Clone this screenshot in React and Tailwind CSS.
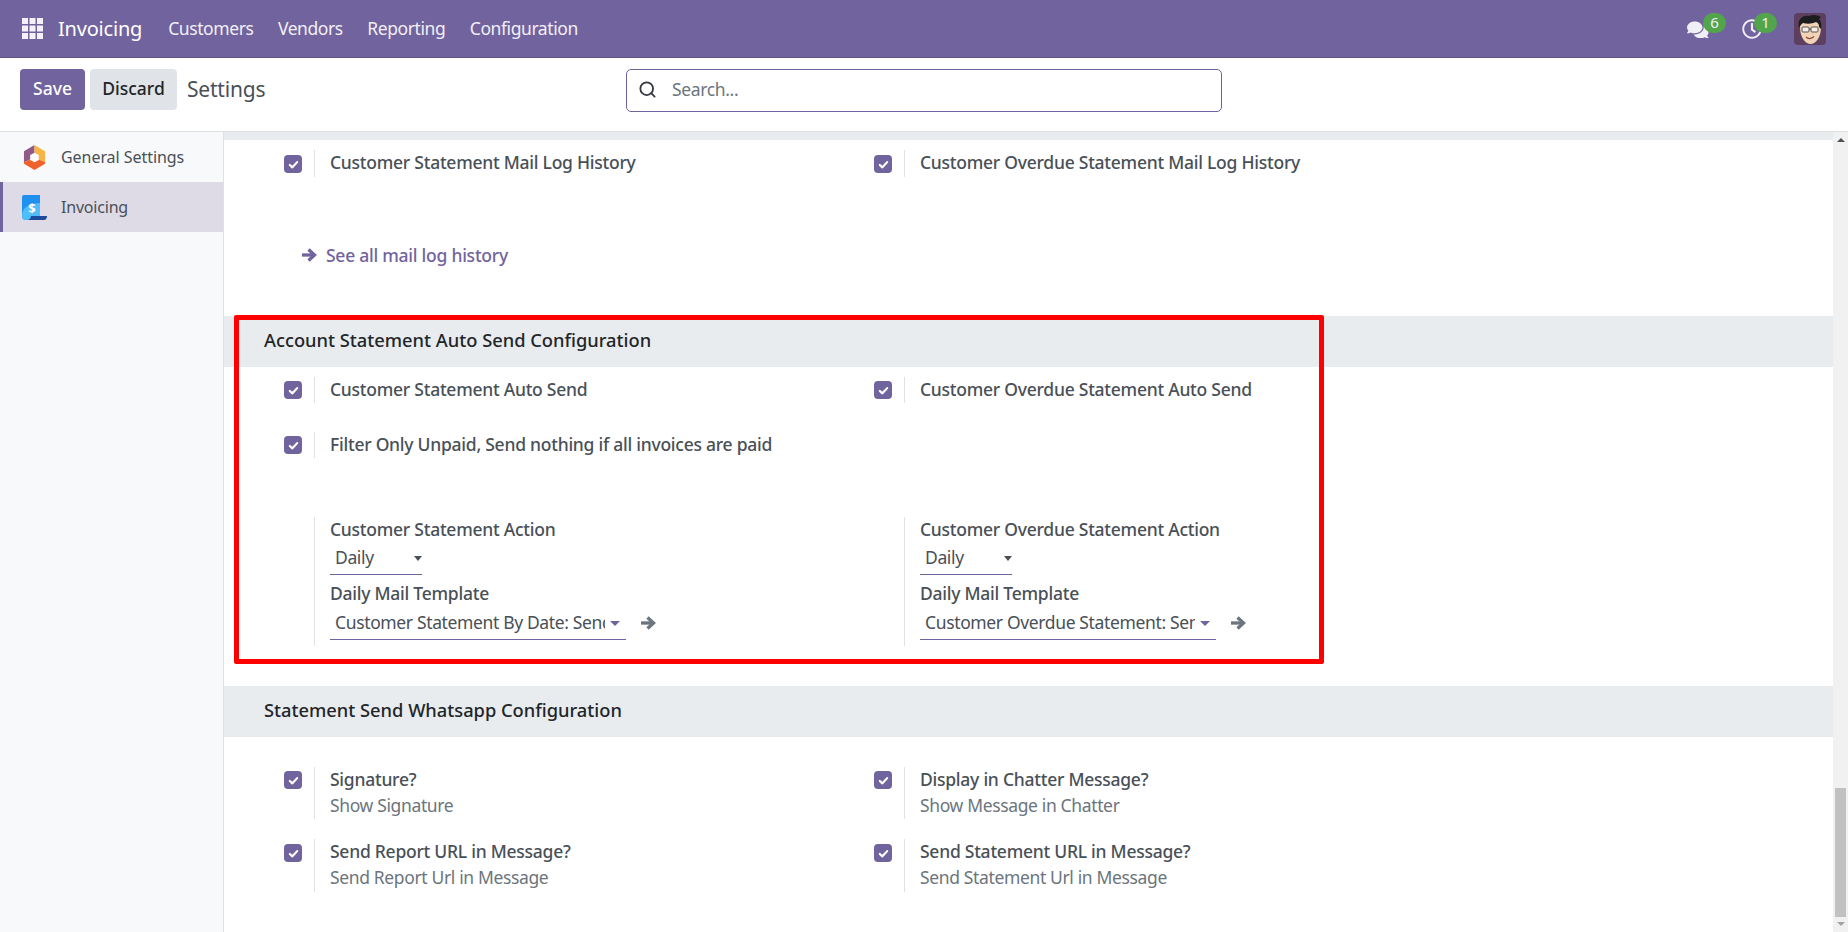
import { FaComments, FaRegClock } from "react-icons/fa";
import { Search } from "lucide-react";

const CheckBox = () => (
  <span className="flex h-[18px] w-[18px] shrink-0 items-center justify-center rounded-[4px] bg-[#71639e]">
    <svg viewBox="0 0 12 12" className="h-[11px] w-[11px]" fill="none" stroke="#fff" strokeWidth="2.4" strokeLinecap="round" strokeLinejoin="round">
      <path d="M2 6.5l2.8 2.6L10 3.4" />
    </svg>
  </span>
);

const Arrow = ({ className }) => (
  <svg viewBox="0 0 15 14" className={className} fill="none" stroke="currentColor" strokeWidth="3.3">
    <path d="M0 7h12" />
    <path d="M6.5 1.5L12.5 7l-6 5.5" strokeLinejoin="miter" />
  </svg>
);

// one checkbox + divider + label box
const Setting = ({ label, hint, boxTop = 4, h }) => (
  <div className="flex" style={{ height: h }}>
    <div style={{ paddingTop: boxTop }}>
      <CheckBox />
    </div>
    <div className="ml-3 border-l border-[#dee2e6] pl-[15px]">
      <div className="text-[17.5px] leading-[24px] font-medium tracking-[-0.25px] text-[#495057]">{label}</div>
      {hint && <div className="mt-px text-[17.5px] leading-[27px] tracking-[-0.36px] text-[#6c757d]">{hint}</div>}
    </div>
  </div>
);

const Header = ({ children }) => (
  <div className="flex h-[51px] items-center bg-[#e9ecef] pb-[3px] pl-[40px] text-[18.3px] font-medium text-[#212529]">
    {children}
  </div>
);

const Select = ({ value, wide }) => (
  <div className={wide ? "flex items-center" : ""}>
    <div
      className={
        wide
          ? "relative h-[29px] w-[296px] border-b border-[#71639e] pl-[5px] text-[17.5px] leading-[22px] tracking-[-0.36px] text-[#495057]"
          : "relative h-[32px] w-[92px] border-b border-[#71639e] pl-[5px] text-[17.5px] leading-[28px] tracking-[-0.36px] text-[#495057]"
      }
    >
      <div className={wide ? "w-[270px] overflow-hidden whitespace-nowrap" : ""}>{value}</div>
      <span
        className={
          wide
            ? "absolute right-[6px] top-[10px] border-x-[5px] border-t-[5px] border-x-transparent border-t-[#71639e]"
            : "absolute right-[0px] top-[13px] border-x-[4px] border-t-[5px] border-x-transparent border-t-[#495057]"
        }
      />
    </div>
    <span className={wide ? "contents" : "hidden"}>
      <Arrow className="mb-[5px] ml-[15px] h-[14px] w-[15px] text-[#6c757d]" />
    </span>
  </div>
);

const ActionBlock = ({ action, template }) => (
  <div className="ml-[30px] h-[129px] border-l border-[#dee2e6] pl-[15px] text-[17.5px] tracking-[-0.25px]">
    <div className="h-[26px] leading-[24px] font-medium text-[#495057]">{action}</div>
    <Select value="Daily" />
    <div className="h-[36px] leading-[36px] font-medium text-[#495057]">Daily Mail Template</div>
    <Select value={template} wide />
  </div>
);

const Grid = ({ className = "", children }) => (
  <div className={"grid grid-cols-[590px_590px] pl-[60px] " + className}>{children}</div>
);

export default function App() {
  return (
    <div className="relative h-[932px] w-[1848px] overflow-hidden bg-white font-['Noto_Sans',sans-serif]">
      {/* Navbar */}
      <nav className="flex h-[58px] items-center border-b border-[#5f5386] bg-[#71639e] text-white">
        <svg viewBox="0 0 21 21" className="ml-[22px] h-[21px] w-[21px]" fill="#f4f2f8">
          {[0, 7.5, 15].map((y) =>
            [0, 7.5, 15].map((x) => <rect key={x + "-" + y} x={x} y={y} width="6" height="6" />)
          )}
        </svg>
        <span className="ml-[15px] text-[20px] tracking-[-0.2px]">Invoicing</span>
        <div className="ml-[26px] flex gap-[24.5px] text-[17.5px] tracking-[-0.42px] text-[#f1eff6]">
          <span>Customers</span>
          <span>Vendors</span>
          <span>Reporting</span>
          <span>Configuration</span>
        </div>
        <div className="ml-auto flex items-center">
          <div className="relative h-[32px] w-[39px]">
            <FaComments className="absolute left-0 top-[6px] text-[21.5px] text-[#f1eff6]" />
            <span className="absolute left-[16px] top-0 flex h-[20px] w-[23px] items-center justify-center rounded-full bg-[#52a54b] text-[15px] text-[#f1eff6]">6</span>
          </div>
          <div className="relative ml-[16px] h-[32px] w-[35px]">
            <FaRegClock className="absolute left-0 top-[6px] text-[20px] text-[#f1eff6]" />
            <span className="absolute left-[12px] top-0 flex h-[20px] w-[23px] items-center justify-center rounded-full bg-[#52a54b] text-[15px] text-[#f1eff6]">1</span>
          </div>
          <svg viewBox="0 0 32 32" className="ml-[17px] mr-[22px] h-[32px] w-[32px] rounded-[4px]">
            <rect width="32" height="32" fill="#5d3f5f" />
            <path d="M6 14c0 10 5 17 10.500 17S27 24 27 14c0-5-4-8-10-8S6 9 6 14z" fill="#f3d3b5" />
            <path d="M5 15C3 7 8 2 15 3c4-2 9-1 12 1l-2 2c2 2 3 6 2 10l-2-2c0-3-1-4-3-5-4 2-9 2-13 1-2 1-3 3-4 5z" fill="#1d1d1f" />
            <rect x="8" y="14" width="7" height="5" rx="1" fill="#f7eee4" stroke="#555" strokeWidth="1" />
            <rect x="17" y="14" width="7" height="5" rx="1" fill="#f7eee4" stroke="#555" strokeWidth="1" />
            <path d="M15 16h2" stroke="#555" strokeWidth="1" />
            <path d="M12 24c2 2 5 2 8-.5" stroke="#8a4a3c" strokeWidth="1.2" fill="none" />
          </svg>
        </div>
      </nav>

      {/* Control panel */}
      <div className="flex h-[74px] items-start border-b border-[#dee2e6] pl-5 pt-[11px]">
        <button className="h-[41px] w-[65px] rounded-[4px] bg-[#71639e] pb-[2px] text-[17.5px] font-medium text-white">Save</button>
        <button className="ml-[5px] h-[41px] w-[87px] rounded-[4px] bg-[#e0e3e7] pb-[2px] text-[17.5px] font-medium text-[#212529]">Discard</button>
        <span className="ml-[10px] mt-[5px] w-[439px] text-[21px] leading-[30px] tracking-[-0.2px] text-[#495057]">Settings</span>
        <div className="flex h-[43px] w-[596px] items-center rounded-[5px] border border-[#71639e] pb-[2px] pl-[11px]">
          <Search size={19} strokeWidth={2.3} className="text-[#343a40]" />
          <span className="ml-[15px] text-[17.5px] tracking-[-0.36px] text-[#6c757d]">Search...</span>
        </div>
      </div>

      <div className="flex h-[800px]">
        {/* Sidebar */}
        <aside className="w-[224px] shrink-0 border-r border-[#dee2e6] bg-[#f8f9fa] text-[16px] text-[#495057]">
          <div className="flex h-[50px] items-center pl-[23px]">
            <svg viewBox="0 0 24 26" className="h-[25px] w-[23px]">
              <polygon points="12,0 1,6.500 1,18 12,13" fill="#8f5a87" />
              <polygon points="12,0 23,6.500 23,18 12,13" fill="#f9b544" />
              <polygon points="1,18 1,19.500 12,26 23,19.500 23,18 12,13" fill="#f0622d" />
              <polygon points="12,8 16.500,10.500 16.500,15.500 12,18 7.500,15.500 7.500,10.500" fill="#fff" />
            </svg>
            <span className="ml-[15px] tracking-[-0.05px]">General Settings</span>
          </div>
          <div className="flex h-[50px] items-center border-l-[3px] border-[#71639e] bg-[#dedbe7] pl-[19px]">
            <svg viewBox="0 0 25 25" className="h-[25px] w-[25px]">
              <path d="M0 2a2 2 0 0 1 2-2h16v25H4a4 4 0 0 1-4-4z" fill="#1f8ff0" />
              <path d="M0 21c0-7 4-12 18-13v17H4a4 4 0 0 1-4-4z" fill="#4fbdfb" />
              <path d="M6 25c2-1 3-2 3-4h16c0 2-1 4-3 4z" fill="#1c4a9c" />
              <text x="10" y="17.500" fontSize="13" fontWeight="700" fill="#fff" textAnchor="middle" fontFamily="Noto Sans">$</text>
            </svg>
            <span className="ml-[14px] tracking-[-0.2px]">Invoicing</span>
          </div>
        </aside>

        {/* Settings body */}
        <main className="flex-1 overflow-hidden bg-white">
          <div className="h-[8px] bg-[#e9ecef]" />
          <Grid className="mt-[10px]">
            <Setting label="Customer Statement Mail Log History" h={27} boxTop={5} />
            <Setting label="Customer Overdue Statement Mail Log History" h={27} boxTop={5} />
          </Grid>
          <div className="ml-[78px] mt-[66px] flex h-[26px] items-center pb-[2px] text-[17.5px] font-medium tracking-[-0.25px] text-[#71639e]">
            <Arrow className="h-[14px] w-[15px]" />
            <span className="ml-[9px]">See all mail log history</span>
          </div>

          <div className="mt-[47px]">
            <Header>Account Statement Auto Send Configuration</Header>
          </div>
          <Grid className="mt-[10px]">
            <Setting label="Customer Statement Auto Send" h={26} />
            <Setting label="Customer Overdue Statement Auto Send" h={26} />
          </Grid>
          <Grid className="mt-[29px]">
            <Setting label="Filter Only Unpaid, Send nothing if all invoices are paid" h={26} />
          </Grid>
          <Grid className="mt-[59px]">
            <ActionBlock action="Customer Statement Action" template="Customer Statement By Date: Send" />
            <ActionBlock action="Customer Overdue Statement Action" template="Customer Overdue Statement: Send" />
          </Grid>

          <div className="mt-[40px]">
            <Header>Statement Send Whatsapp Configuration</Header>
          </div>
          <Grid className="mt-[30px]">
            <Setting label="Signature?" hint="Show Signature" h={52} />
            <Setting label="Display in Chatter Message?" hint="Show Message in Chatter" h={52} />
          </Grid>
          <Grid className="mt-[20px]">
            <Setting label="Send Report URL in Message?" hint="Send Report Url in Message" h={53} boxTop={5} />
            <Setting label="Send Statement URL in Message?" hint="Send Statement Url in Message" h={53} boxTop={5} />
          </Grid>
        </main>

        {/* Scrollbar */}
        <div className="flex w-[15px] shrink-0 flex-col items-center bg-[#f1f1f1] pb-[6px] pt-[6px]">
          <span className="border-x-[4px] border-b-[4px] border-x-transparent border-b-[#505050]" />
          <div className="mb-[5px] mt-auto h-[129px] w-[11px] bg-[#c1c1c1]" />
          <span className="border-x-[4px] border-t-[4px] border-x-transparent border-t-[#a3a3a3]" />
        </div>
      </div>

      {/* Red annotation box */}
      <div className="absolute left-[234px] top-[315px] h-[349px] w-[1090px] rounded-[2px] border-[5px] border-[#ff0000]" />
    </div>
  );
}
